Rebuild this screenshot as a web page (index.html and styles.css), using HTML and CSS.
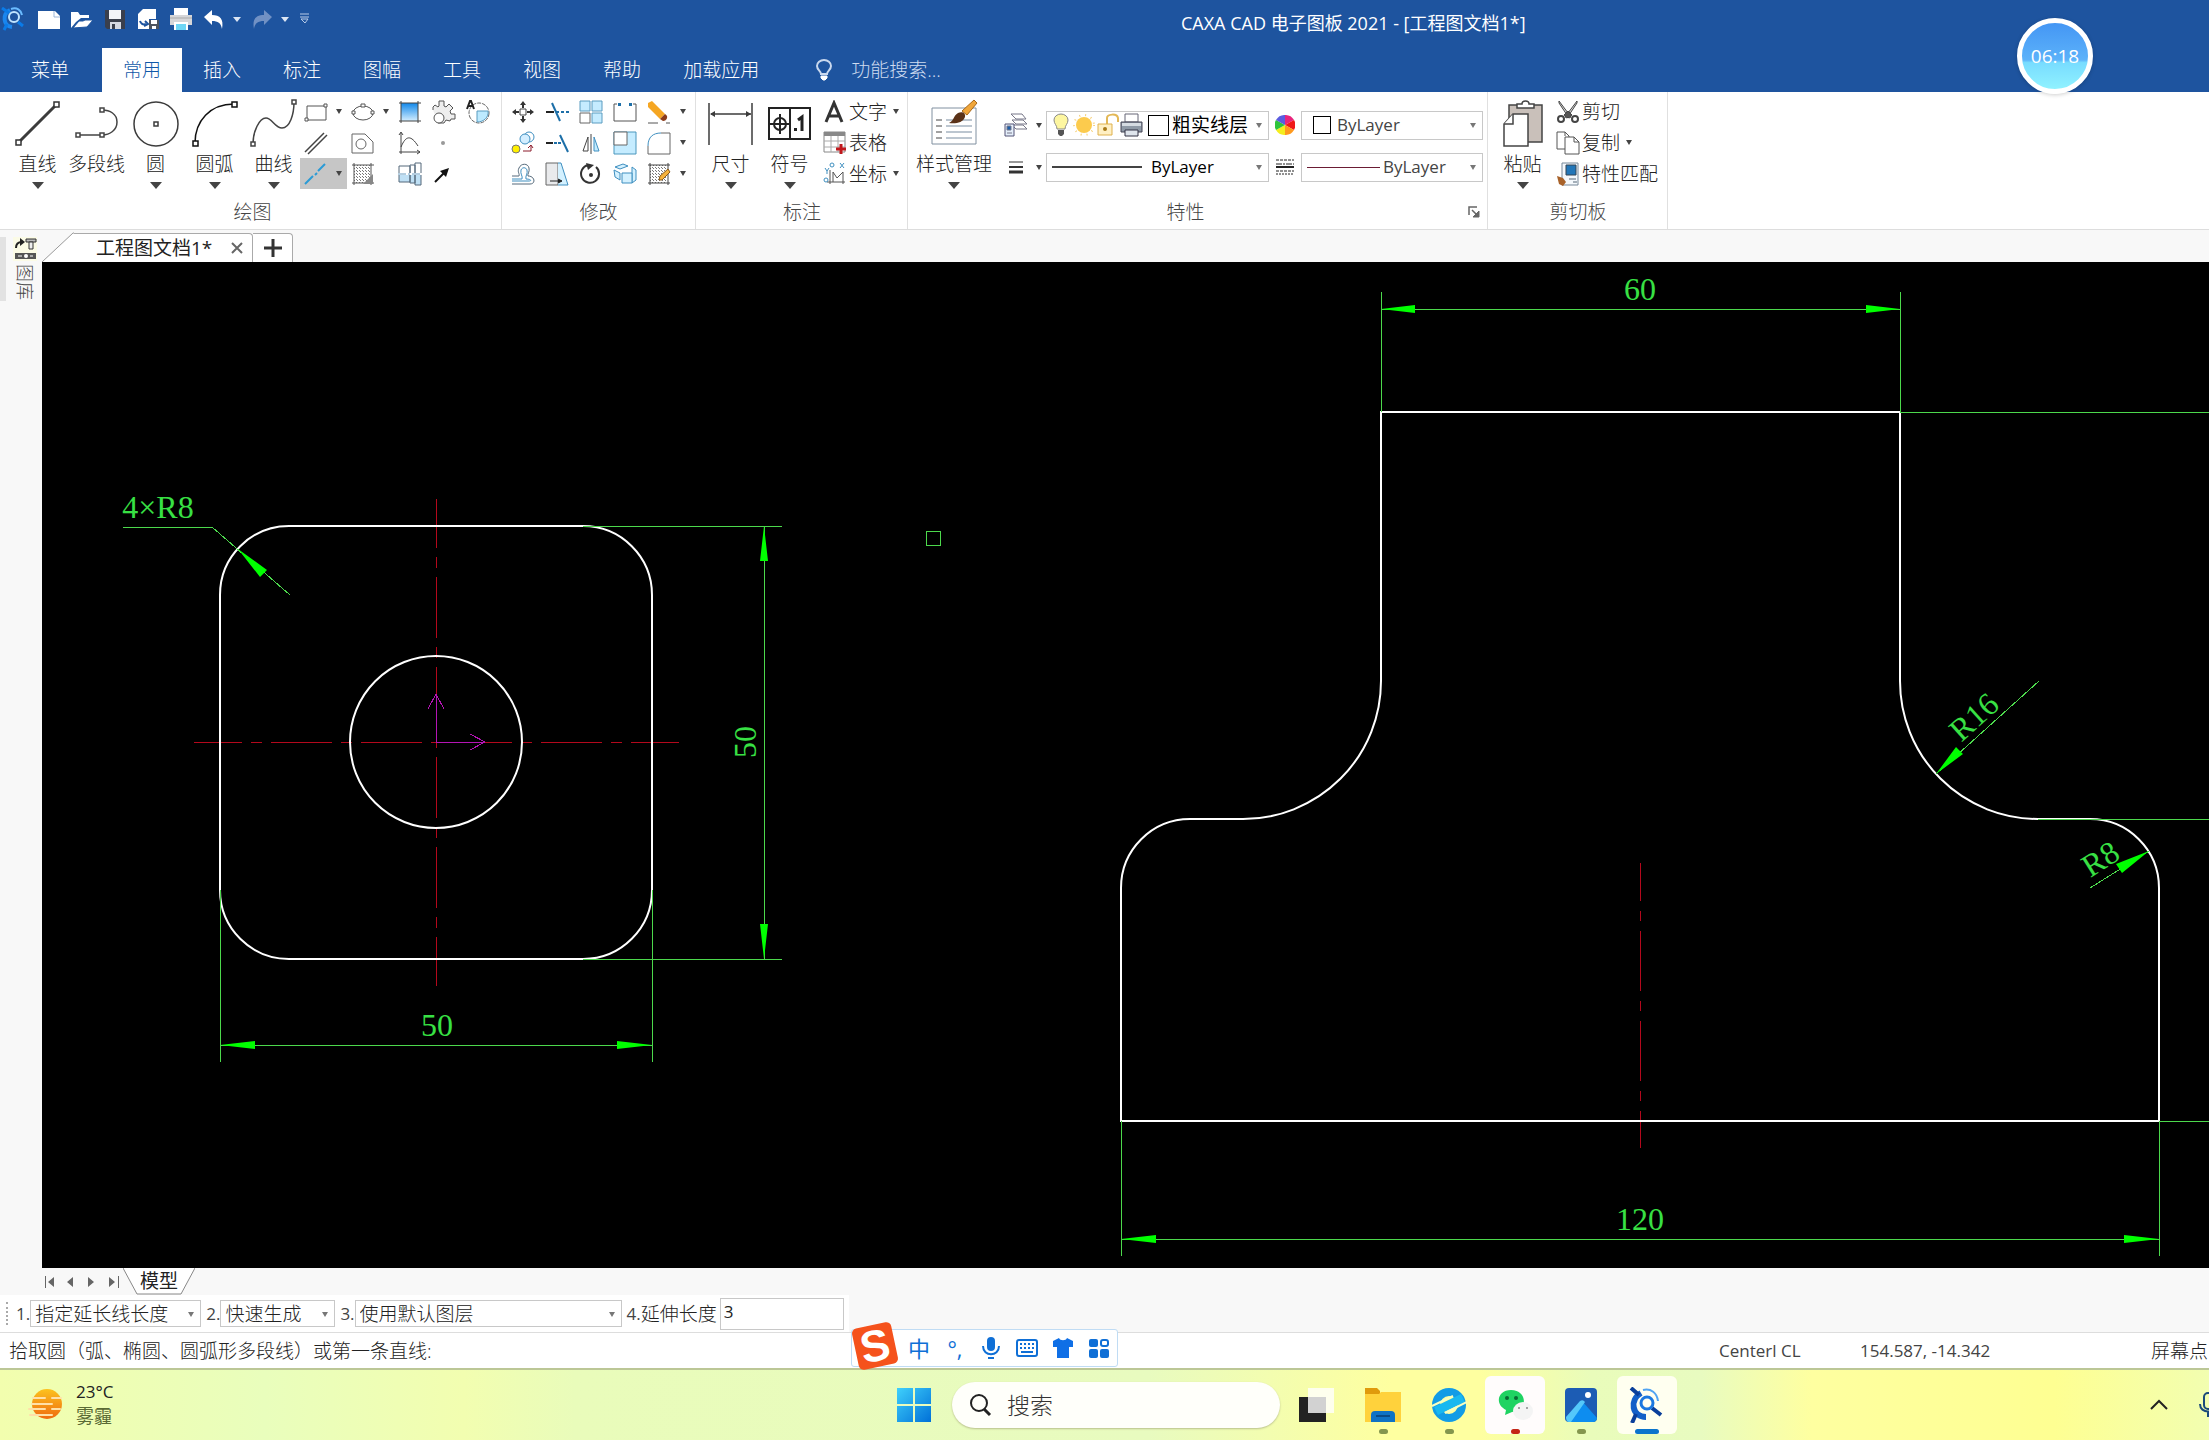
FILE: index.html
```html
<!DOCTYPE html>
<html lang="zh-CN">
<head>
    <meta charset="UTF-8">
    <meta name="viewport" content="width=device-width, initial-scale=1.0">
    <title>CAXA CAD 电子图板 2021</title>
    <link rel="stylesheet" href="styles.css">
</head>
<body>

<!-- title bar and ribbon tabs -->
<header class="header">
    <div class="titlebar">
        <div class="quick">
            <svg class="app" width="24" height="24" viewBox="0 0 24 24" fill="none"><path d="M9 3C1 7 2 19 11 20" stroke="#1a86ee" stroke-width="4"/><circle cx="13" cy="10" r="5" stroke="#bfe4ff" stroke-width="2"/><path d="M1 1l7 5M6 17l-3 6M17 15l5 4" stroke="#0a7be8" stroke-width="3"/><path d="M10 2c6-2 10 1 11 6" stroke="#6bbcff" stroke-width="2"/></svg>
            <svg width="24" height="24" viewBox="0 0 24 24"><path d="M1 4h17l5 5v13H1z" fill="#fff"/><path d="M17 4v6h6" fill="none" stroke="#9db6d8"/></svg>
            <svg width="24" height="24" viewBox="0 0 24 24"><path d="M1 21V5h7l2 3h9v3h-8l-5 4z" fill="#fff"/><path d="M3 21l6-7h4l2-1h8l-6 7z" fill="#fff" stroke="#1e549f"/></svg>
            <svg width="24" height="24" viewBox="0 0 24 24"><path d="M2 3h20v19H4l-2-2z" fill="#3a3f4c"/><path d="M6 3h12v9H6z" fill="#f2f4f8"/><path d="M7 15h11v7H7z" fill="#d5d9e2"/><path d="M9 17h3v5H9z" fill="#3a3f4c"/></svg>
            <svg width="24" height="24" viewBox="0 0 24 24"><path d="M7 2h13v10H2V7z" fill="#fff"/><path d="M2 11h11v11H2z" fill="#fff"/><path d="M4 14c1 3 3 4 6 3M9 14l3 3-4 2" fill="none" stroke="#1e549f" stroke-width="2"/><path d="M13 13h10v9H13z" fill="#4d545f"/><path d="M15 13h6v4h-6zM16 19h4v3h-4z" fill="#fff"/></svg>
            <svg width="24" height="24" viewBox="0 0 24 24"><path d="M5 1h14v7H5z" fill="#fff"/><path d="M1 8h22v10H1z" fill="#d6d6d8"/><path d="M5 15h14v8H5z" fill="#fff"/><path d="M7 17h10v6H7z" fill="#6ed6f5"/><path d="M1 11h22" stroke="#aaa"/></svg>
            <span class="undo"><svg width="24" height="24" viewBox="0 0 24 24"><path d="M2 10l8-7v5c8 0 12 4 10 14-1-6-4-8-10-8v4z" fill="#fff"/></svg><i class="arrow light"></i></span>
            <span class="undo"><svg width="24" height="24" viewBox="0 0 24 24"><path d="M22 10l-8-7v5C6 8 2 12 4 22c1-6 4-8 10-8v4z" fill="#7191c4"/></svg><i class="arrow light"></i></span>
            <svg width="12" height="12" viewBox="0 0 12 12"><path d="M2 1h9M2 4h9" stroke="#b8cbe8"/><path d="M3 6h7l-3 4z" fill="none" stroke="#b8cbe8"/></svg>
        </div>
        <div class="title">CAXA CAD 电子图板 2021 - [工程图文档1*]</div>
    </div>
    <nav class="tabs">
        <a href="#" class="menu">菜单</a>
        <a href="#" class="active">常用</a>
        <a href="#">插入</a>
        <a href="#">标注</a>
        <a href="#">图幅</a>
        <a href="#">工具</a>
        <a href="#">视图</a>
        <a href="#">帮助</a>
        <a href="#">加载应用</a>
        <label class="find">
            <svg width="18" height="22" viewBox="0 0 18 22" fill="none" stroke="#c9d8ee" stroke-width="2"><path d="M6 15c0-3-4-4-4-8a7 6 0 0 1 14 0c0 4-4 5-4 8z"/><path d="M6 17h6v2l-2 2H8l-2-2z" fill="#fff" stroke="#fff" stroke-width="1"/></svg>
            <input type="text" placeholder="功能搜索...">
        </label>
    </nav>
    <div class="timer"><span>06:18</span></div>
</header>

<section class="ribbon">
    <div class="group g-draw">
        <div class="tools">
            <button class="big"><svg width="48" height="48" viewBox="0 0 48 48"><path d="M5 43L42 6" stroke="#3c3c3c" stroke-width="3"/><path d="M2 41h5v5H2zM40 3h5v5h-5z" fill="#fff" stroke="#333" stroke-width="1.5"/></svg>直线<i class="arrow"></i></button>
            <button class="big"><svg width="48" height="48" viewBox="0 0 48 48" fill="none" stroke="#444" stroke-width="1.5"><path d="M5 36h24c8 0 15-5 15-13S37 11 29 11"/><path d="M3 34h4v4H3zM27 34h4v4h-4zM27 9h4v4h-4z" fill="#fff"/></svg>多段线</button>
            <button class="big"><svg width="48" height="48" viewBox="0 0 48 48" fill="none" stroke="#3c3c3c" stroke-width="1.5"><circle cx="24" cy="25" r="22"/><path d="M22 23h4v4h-4z"/></svg>圆<i class="arrow"></i></button>
            <button class="big"><svg width="48" height="48" viewBox="0 0 48 48" fill="none" stroke="#111" stroke-width="1.5"><path d="M4 44C4 22 19 5 43 5"/><path d="M2 42h5v5H2zM41 3h5v5h-5z" fill="#fff"/></svg>圆弧<i class="arrow"></i></button>
            <button class="big"><svg width="48" height="48" viewBox="0 0 48 48" fill="none" stroke="#444" stroke-width="1.5"><path d="M3 45c0-12 6-26 13-26 6 0 9 10 16 10 8 0 12-14 12-26"/><path d="M1 43h4v4H1zM42 1h4v4h-4z" fill="#fff"/></svg>曲线<i class="arrow"></i></button>
            <div class="minis draw-minis">
                <button title="矩形"><svg width="24" height="24" viewBox="0 0 24 24" fill="none" stroke="#555"><path d="M3 6h19v14H3z"/><path d="M1 18h3v3H1zM20 4h3v3h-3z" fill="#fff"/></svg><i class="arrow small"></i></button>
                <button title="椭圆"><svg width="24" height="24" viewBox="0 0 24 24" fill="none" stroke="#555"><ellipse cx="12" cy="13" rx="10" ry="7"/><path d="M1 11h3v3H1zM20 11h3v3h-3zM10 4h4v3h-4z" fill="#fff"/></svg><i class="arrow small"></i></button>
                <button title="渐变"><svg width="24" height="24" viewBox="0 0 24 24"><defs><linearGradient id="blue" x2="0" y2="1"><stop offset="0" stop-color="#1188ea"/><stop offset="1" stop-color="#d4eeff"/></linearGradient></defs><path d="M3 3h17v18H3z" fill="url(#blue)"/><path d="M1 3h22M1 21h22M3 1v22M20 1v22" stroke="#444"/></svg></button>
                <button title="齿轮"><svg width="24" height="24" viewBox="0 0 24 24" fill="#eee" stroke="#555"><path d="M1 10V7l2-2 3 2 1-1V1h5v5l2 1 3-3 4 4-3 3 1 3h4v5h-4l-1 2-4-1-2 3H6"/><circle cx="7" cy="18" r="5" fill="#fff"/></svg></button>
                <button title="局部放大"><svg width="24" height="24" viewBox="0 0 24 24" fill="none"><circle cx="13" cy="13" r="10" stroke="#666" stroke-dasharray="4 1"/><path d="M11 11h11c1 6-4 11-11 11z" fill="#bdeaff" stroke="#5a9cc0"/><path d="M1 9l3-8h1l3 8M2 6h5" stroke="#222" stroke-width="2"/></svg></button>
                <button title="平行线"><svg width="24" height="24" viewBox="0 0 24 24"><path d="M1 21L20 2M4 23L23 4" stroke="#444" stroke-width="1.5"/></svg></button>
                <button title="轮廓"><svg width="24" height="24" viewBox="0 0 24 24" fill="none" stroke="#666"><path d="M1 3h13l8 8v11H1z"/><circle cx="10" cy="13" r="5"/></svg></button>
                <button title="公式曲线"><svg width="24" height="24" viewBox="0 0 24 24" fill="none" stroke="#444"><path d="M3 23V2M1 4l2-3 2 3M1 21h21l-3-2M22 21l-3 2M3 16c5-12 10-12 17-1"/></svg></button>
                <button title="点"><svg width="24" height="24" viewBox="0 0 24 24"><circle cx="11" cy="12" r="2" fill="#999"/></svg></button>
                <span></span>
                <button title="中心线" class="on"><svg width="24" height="24" viewBox="0 0 24 24"><path d="M1 22l8-8M11 13l2-2M14 9l7-7" stroke="#2b9bd6" stroke-width="2"/></svg><i class="arrow small"></i></button>
                <button title="剖面线"><svg width="24" height="24" viewBox="0 0 24 24"><defs><pattern id="hatch" width="3" height="3" patternUnits="userSpaceOnUse"><path d="M0 0h1v1H0zM2 2h1v1H2z" fill="#777"/></pattern></defs><path d="M3 3h17v18H3z" fill="url(#hatch)"/><path d="M1 3h22M1 21h22M3 1v22M20 1v22" stroke="#555"/><path d="M22 12v10H12z" fill="#888"/></svg></button>
                <button title="孔/轴"><svg width="24" height="24" viewBox="0 0 24 24" stroke="#55697a"><path d="M1 4h11v8H1zM12 3h5v9h-5zM17 1h6v11h-6z" fill="#fff"/><path d="M1 12h11v8H1zM12 12h5v9h-5zM17 12h6v11h-6z" fill="#bfe0f5"/><path d="M0 12h24" stroke="#fff" stroke-width="2"/><path d="M0 12h24" stroke="#6a9cc0" stroke-dasharray="8 2 2 2"/></svg></button>
                <button title="箭头"><svg width="24" height="24" viewBox="0 0 24 24"><path d="M3 20l9-9" stroke="#111" stroke-width="2"/><path d="M17 6l-3 9-6-6z" fill="#111"/></svg></button>
            </div>
        </div>
        <div class="caption">绘图</div>
    </div>

    <div class="group g-modify">
        <div class="tools">
            <div class="minis modify-minis">
                <button title="平移"><svg width="24" height="24" viewBox="0 0 24 24"><path d="M9 9h6v6H9z" fill="none" stroke="#444"/><path d="M12 1l3 4h-2v3h-2V5H9zM12 23l3-4h-2v-3h-2v3H9zM1 12l4-3v2h3v2H5v2zM23 12l-4-3v2h-3v2h3v2z" fill="#333"/></svg></button>
                <button title="裁剪"><svg width="24" height="24" viewBox="0 0 24 24"><path d="M1 12h8" stroke="#222" stroke-width="2"/><path d="M11 12h13" stroke="#1d6fa8" stroke-width="2" stroke-dasharray="3 2"/><path d="M7 3l8 18" stroke="#1d6fa8" stroke-width="2"/></svg></button>
                <button title="阵列"><svg width="24" height="24" viewBox="0 0 24 24" fill="#c5ecff" stroke="#5a9cc0"><path d="M1 1h10v10H1zM13 1h10v10H13zM13 13h10v10H13z"/><path d="M1 13h10v10H1z" fill="#fff" stroke="#666"/></svg></button>
                <button title="打断"><svg width="24" height="24" viewBox="0 0 24 24"><path d="M4 4H1v17h22V4h-3" fill="none" stroke="#555"/><path d="M5 3h3v3H5zM16 3h3v3h-3z" fill="#1d6fa8"/></svg></button>
                <button title="删除"><svg width="24" height="24" viewBox="0 0 24 24"><path d="M1 3l4-2 13 13-5 5L1 7z" fill="#f5a623"/><path d="M13 19l5-5c4 2 2 7-2 7z" fill="#8a3a1a"/><path d="M1 23h10M19 23h4" stroke="#555"/></svg><i class="arrow small"></i></button>
                <button title="平移复制"><svg width="24" height="24" viewBox="0 0 24 24"><circle cx="18" cy="6" r="5" fill="#fff" stroke="#3f8fc0"/><circle cx="14" cy="8" r="5" fill="#d4eeff" stroke="#3f8fc0"/><circle cx="5" cy="18" r="4" fill="#ffef00" stroke="#777"/><path d="M12 20h8v-5M17 17l3-3 2 3" fill="none" stroke="#8b1a2a"/></svg></button>
                <button title="延伸"><svg width="24" height="24" viewBox="0 0 24 24"><path d="M1 12h7" stroke="#222" stroke-width="2"/><path d="M9 12h8" stroke="#1d6fa8" stroke-width="2" stroke-dasharray="3 1"/><path d="M15 4l8 17" stroke="#1d6fa8" stroke-width="2"/></svg></button>
                <button title="镜像"><svg width="24" height="24" viewBox="0 0 24 24" fill="none"><path d="M9 6v14H4z" stroke="#444"/><path d="M15 6v14h5z" fill="#c5ecff" stroke="#3f8fc0"/><path d="M12 3v20" stroke="#444"/></svg></button>
                <button title="缩放"><svg width="24" height="24" viewBox="0 0 24 24"><path d="M1 1h22v22H1z" fill="#c5ecff" stroke="#4a97bd"/><path d="M1 1h13v13H1z" fill="#fff" stroke="#666"/></svg></button>
                <button title="过渡"><svg width="24" height="24" viewBox="0 0 24 24" fill="none"><path d="M14 2h9v21H1v-8" stroke="#666"/><path d="M1 15C1 6 6 2 14 2" stroke="#3f8fc0"/></svg><i class="arrow small"></i></button>
                <button title="等距线"><svg width="24" height="24" viewBox="0 0 24 24" fill="none"><path d="M1 14h7c1-2-2-4 0-8 2-5 9-5 10 0 1 4-2 6-1 8 7 0 8 8 2 8H1" stroke="#55697a"/><path d="M1 17h10c1-3-2-5-1-9 1-3 5-3 6 0 1 4-2 6-1 9 5 0 6 2 3 2H1" stroke="#3f8fc0"/></svg></button>
                <button title="拉伸"><svg width="24" height="24" viewBox="0 0 24 24"><path d="M1 1h12v22H1z" fill="#e9eaec" stroke="#666"/><path d="M13 1h3l7 22H13" fill="#d4f1ff" stroke="#3f8fc0"/><path d="M5 19h10M13 17l4 2-4 2" fill="#222" stroke="#222"/></svg></button>
                <button title="旋转"><svg width="24" height="24" viewBox="0 0 24 24"><path d="M17 5a9 9 0 1 1-8-2" fill="none" stroke="#333" stroke-width="2"/><path d="M7 1l8 2-6 5z" fill="#333"/><circle cx="12" cy="13" r="2" fill="#333"/></svg></button>
                <button title="三维"><svg width="24" height="24" viewBox="0 0 24 24" fill="#d4f1ff" stroke="#3f8fc0"><path d="M2 5l8-3 5 2-8 3zM1 8l6 3v7l-5-3zM19 5l4 3v10l-4 3z"/><path d="M9 11h10v10H9z"/></svg></button>
                <button title="编辑填充"><svg width="24" height="24" viewBox="0 0 24 24"><path d="M3 3h17v18H3z" fill="url(#hatch)"/><path d="M1 3h22M1 21h22M3 1v22M21 1v22" stroke="#444"/><path d="M12 18l1-4 8-7 2 3-8 8z" fill="#f5b23c" stroke="#8a5a1a"/></svg><i class="arrow small"></i></button>
            </div>
        </div>
        <div class="caption">修改</div>
    </div>

    <div class="group g-note">
        <div class="tools">
            <button class="big"><svg width="48" height="48" viewBox="0 0 48 48" stroke="#3c3c3c" stroke-width="1.5"><path d="M2 4v42M45 4v42M4 15h40"/><path d="M3 15l5-3v6zM44 15l-5-3v6z" fill="#3c3c3c" stroke="none"/></svg>尺寸<i class="arrow"></i></button>
            <button class="big"><svg width="48" height="48" viewBox="0 0 48 48" fill="none" stroke="#222" stroke-width="2"><path d="M3 9h41v31H3zM24 9v31M4 25h19M14 15v20"/><circle cx="14" cy="25" r="6"/><path d="M28 29h3v3h-3z" fill="#222" stroke="none"/><path d="M32 21l4-3v14" stroke-width="3"/></svg>符号<i class="arrow"></i></button>
            <div class="rows">
                <button><svg width="24" height="24" viewBox="0 0 24 24" fill="none" stroke="#333" stroke-width="3"><path d="M3 22L11 3l8 19M6 16h10"/></svg>文字<i class="arrow small"></i></button>
                <button><svg width="24" height="24" viewBox="0 0 24 24"><path d="M1 1h21v20H1z" fill="#fff" stroke="#888"/><path d="M1 1h21v4H1z" fill="#888"/><path d="M1 10h21M1 16h21M8 5v16M15 5v16" stroke="#aaa"/><path d="M18 13v10M13 18h10" stroke="#c0181c" stroke-width="3"/></svg>表格</button>
                <button><svg width="24" height="24" viewBox="0 0 24 24" fill="none"><path d="M7 8v14M4 20h18M10 20V10l4 6 6-6v12" stroke="#555"/><path d="M2 6l2 3 2-3M4 9v3M17 1l4 5M21 1l-4 5" stroke="#3f8fc0"/><circle cx="9" cy="3" r="2" stroke="#3f8fc0"/><circle cx="3" cy="18" r="2" stroke="#3f8fc0"/></svg>坐标<i class="arrow small"></i></button>
            </div>
        </div>
        <div class="caption">标注</div>
    </div>

    <div class="group g-prop">
        <div class="tools">
            <button class="big"><svg width="48" height="48" viewBox="0 0 48 48"><path d="M2 9h44v36H2z" fill="#fff" stroke="#8090a0"/><path d="M6 21h6M6 27h6M6 33h6M6 39h6" stroke="#444"/><path d="M16 21h26M16 27h26M16 33h26M16 39h26" stroke="#bcc6d0" stroke-width="2"/><path d="M32 12L44 1l3 3-10 12z" fill="#f0a63a" stroke="#a86818"/><path d="M19 24c5-2 4-7 9-10 4-2 8 0 7 4-2 6-10 7-16 6z" fill="#5a3218"/></svg>样式管理<i class="arrow"></i></button>
            <div class="props">
                <button class="tiny"><svg width="24" height="24" viewBox="0 0 24 24" fill="#fff" stroke="#778"><path d="M8 12h11l4 4H12zM8 7h11l4 4H12zM7 1h11l4 5H12z"/><path d="M1 11h9v12H1z" fill="#e4eefa" stroke="#557"/><path d="M3 13h4v4H3z" fill="#1d5fa8"/><path d="M3 20h5"/></svg><i class="arrow small"></i></button>
                <div class="combo layer">
                    <svg width="20" height="24" viewBox="0 0 20 24"><path d="M6 16C6 12 3 11 3 7a7 6 0 0 1 14 0c0 4-3 5-3 9z" fill="#fdf6a0" stroke="#888"/><path d="M7 17h6v4l-2 2H9l-2-2z" fill="#555"/></svg>
                    <svg width="24" height="24" viewBox="0 0 24 24"><circle cx="13" cy="12" r="10" fill="none" stroke="#f6cf75" stroke-width="2" stroke-dasharray="1 5"/><circle cx="13" cy="12" r="8" fill="#fccb4d"/></svg>
                    <svg width="24" height="24" viewBox="0 0 24 24"><path d="M12 11V5c0-4 10-5 11 0v4" fill="none" stroke="#e3b856" stroke-width="2"/><path d="M3 11h14v11H3z" fill="#fff0c4" stroke="#dfb14d"/><circle cx="10" cy="16" r="2" fill="#a87a18"/></svg>
                    <svg width="24" height="24" viewBox="0 0 24 24"><path d="M6 1h13v8H6z" fill="#fff" stroke="#667"/><path d="M2 9h21v10H2z" fill="#8e99a6" stroke="#445"/><path d="M3 10h19v3H3z" fill="#d5dbe2"/><path d="M6 17h13v6H6z" fill="#dfe5ec" stroke="#334"/></svg>
                    <i class="swatch big-swatch"></i>
                    <select aria-label="图层"><option>粗实线层</option></select>
                </div>
                <svg width="20" height="20" viewBox="0 0 20 20"><path d="M10 10V0a10 10 0 0 1 9 5z" fill="#e8247c"/><path d="M10 10l9-5a10 10 0 0 1 0 10z" fill="#f01818"/><path d="M10 10l9 5a10 10 0 0 1-9 5z" fill="#ff9a1e"/><path d="M10 10v10a10 10 0 0 1-9-5z" fill="#f4ee1e"/><path d="M10 10l-9 5a10 10 0 0 1 0-10z" fill="#2ec43c"/><path d="M10 10L1 5a10 10 0 0 1 9-5z" fill="#5a5ce0"/></svg>
                <div class="combo color"><i class="swatch"></i><select aria-label="颜色"><option>ByLayer</option></select></div>
                <button class="tiny"><svg width="24" height="24" viewBox="0 0 24 24" stroke="#333"><path d="M5 7h14"/><path d="M5 12h14" stroke-width="2"/><path d="M5 17h14" stroke-width="3"/></svg><i class="arrow small"></i></button>
                <div class="combo width"><i class="thick"></i><select aria-label="线宽"><option>ByLayer</option></select></div>
                <svg width="20" height="20" viewBox="0 0 20 20" stroke="#222"><path d="M1 3h18M1 14h18" stroke-dasharray="3 1"/><path d="M1 7h18" stroke-dasharray="6 1 2 1"/><path d="M1 10h18" stroke-width="2"/><path d="M1 17h18" stroke-dasharray="2 1"/></svg>
                <div class="combo type"><i class="thin"></i><select aria-label="线型"><option>ByLayer</option></select></div>
            </div>
        </div>
        <div class="caption">特性<svg class="launch" width="14" height="14" viewBox="0 0 14 14" fill="none" stroke="#666"><path d="M2 10V2h8M5 5l6 6" stroke-width="1.5"/><path d="M12 6v6H6z" fill="#666"/></svg></div>
    </div>

    <div class="group g-clip">
        <div class="tools">
            <button class="big"><svg width="48" height="48" viewBox="0 0 48 48" stroke="#444" stroke-width="1.5"><path d="M10 6h33v37H10z" fill="#c9c0ba"/><path d="M18 9V5h5c0-4 7-4 7 0h5v4z" fill="#fff"/><path d="M5 25l9-10h15v32H5z" fill="#fff"/><path d="M5 25h9V15" fill="#fff"/></svg>粘贴<i class="arrow"></i></button>
            <div class="rows">
                <button><svg width="24" height="24" viewBox="0 0 24 24" fill="none" stroke="#444"><path d="M3 1l12 16-2 1L3 3zM21 1L9 17l2 1L21 3z" fill="#ddd"/><path d="M8 15l4-4 4 4-4 3z" fill="#555"/><circle cx="5" cy="19" r="3" stroke-width="2"/><circle cx="19" cy="19" r="3" stroke-width="2"/></svg>剪切</button>
                <button><svg width="24" height="24" viewBox="0 0 24 24" fill="#fff" stroke="#555"><path d="M1 1h8l4 4v13H1z"/><path d="M9 6h9l5 5v12H9z"/><path d="M18 6v5h5M9 1v4" fill="none"/></svg>复制<i class="arrow small"></i></button>
                <button><svg width="24" height="24" viewBox="0 0 24 24"><path d="M6 1h16v22H6z" fill="#f4f8fc" stroke="#789"/><path d="M10 3h10v10H10z" fill="#2276b8" stroke="#345"/><path d="M13 17h7M17 20h4" stroke="#567"/><path d="M1 14l6 2 3 4-3 4-4-2z" fill="#a8622a"/></svg>特性匹配</button>
            </div>
        </div>
        <div class="caption">剪切板</div>
    </div>
</section>

<!-- library strip and drawing area -->
<main class="work">
    <aside class="side">
        <svg width="24" height="24" viewBox="0 0 24 24"><path d="M0 0h24v24H0z" fill="#fbfbe6"/><path d="M3 11c0-4 2-6 6-6" fill="none" stroke="#222" stroke-width="2"/><path d="M7 1l5 4-5 4z" fill="#222"/><path d="M13 2h10v3H13z" fill="#bbb" stroke="#333"/><path d="M16 5h4v7h-4z" fill="#eee" stroke="#333"/><path d="M2 16h21v6H2z" fill="#555"/><path d="M5 19h4M17 19h3" stroke="#fff"/><circle cx="13" cy="19" r="2" fill="#fff"/></svg>
        <span>图库</span>
    </aside>
    <div class="docs">
        <div class="doctabs">
            <svg class="slope" width="32" height="32" viewBox="0 0 32 32"><path d="M0 32L31 3h1v29z" fill="#fff"/><path d="M0 32L31 3h1" fill="none" stroke="#999"/></svg>
            <div class="doctab">工程图文档1*<button title="关闭"><svg width="12" height="12" viewBox="0 0 12 12" stroke="#666" stroke-width="2"><path d="M1 1l10 10M11 1L1 11"/></svg></button></div>
            <button class="newtab" title="新建"><svg width="18" height="18" viewBox="0 0 18 18" stroke="#333" stroke-width="3"><path d="M9 0v18M0 9h18"/></svg></button>
        </div>
        <div class="canvas">
            <svg class="drawing" width="100%" height="100%">
                <g transform="translate(-42 -262)">
                    <g class="center">
                        <path d="M436 499V986" stroke-dasharray="61 9 11 9" stroke-dashoffset="12"/>
                        <path d="M194 742H679" stroke-dasharray="61 9 11 9" stroke-dashoffset="13"/>
                        <path d="M1640 863V1148" stroke-dasharray="60 10 10 10" stroke-dashoffset="22"/>
                    </g>
                    <g class="outline">
                        <rect x="220" y="526" width="432" height="433" rx="69"/>
                        <circle cx="436" cy="742" r="86"/>
                        <path d="M1381 412H1900V681A138 138 0 0 0 2038 819H2090A69 69 0 0 1 2159 888V1121H1121V888A69 69 0 0 1 1190 819H1243A138 138 0 0 0 1381 681Z"/>
                    </g>
                    <path class="ucs" d="M436 742V694M428 709L436 694L444 709M436 742H485M470 734L485 742L470 750"/>
                    <g class="dim">
                        <path d="M583 526H782M583 959H782M764 526V959"/>
                        <path d="M220 890V1062M652 890V1062M220 1045H652"/>
                        <path d="M123 527H212L290 595"/>
                        <path d="M1381 292V412M1900 292V412M1381 309H1900"/>
                        <path d="M1900 412H4000M2038 819H4000M2159 1121H4000"/>
                        <path d="M1121 1121V1256M2159 1121V1256M1121 1239H2159"/>
                        <path d="M2039 681L1936 774M2090 888L2149 851"/>
                        <rect x="926" y="531" width="14" height="14"/>
                    </g>
                    <g class="tips">
                        <path d="M764 526l4 35h-8zM764 959l4-35h-8z"/>
                        <path d="M220 1045l35-4v8zM652 1045l-35-4v8z"/>
                        <path d="M1381 309l34-4v8zM1900 309l-34-4v8z"/>
                        <path d="M1121 1239l35-4v8zM2159 1239l-35-4v8z"/>
                        <path d="M238 549l29 21-7 7zM1936 774l20-27 7 7zM2149 851l-27 22-6-9z"/>
                    </g>
                    <g class="values">
                        <text x="158" y="518">4×R8</text>
                        <text x="437" y="1036">50</text>
                        <text x="1640" y="300">60</text>
                        <text x="1640" y="1230">120</text>
                        <text transform="translate(756 742) rotate(-90)">50</text>
                        <text transform="translate(1981 725) rotate(-42)">R16</text>
                        <text transform="translate(2106 868) rotate(-32)">R8</text>
                    </g>
                </g>
            </svg>
        </div>
    </div>
</main>

<div class="sheets">
    <div class="nav">
        <svg width="64" height="12" viewBox="0 0 64 12" fill="#666"><path d="M0 0h1v12H0zM9 1v10L3 6zM28 1v10l-6-5zM43 1v10l6-5z"/></svg>
        <svg width="12" height="12" viewBox="0 0 12 12" fill="#666"><path d="M-3 1v10l6-5z"/><path d="M0 1v10l6-5zM9 0h1v12H9z"/></svg>
    </div>
    <div class="sheet"><svg width="72" height="27" viewBox="0 0 72 27"><path d="M0 0l14 26h44L72 0" fill="#fff" stroke="#888"/></svg><span>模型</span></div>
</div>

<form class="options">
    <div class="optbox">
        <i class="grip"></i>
        <label><span class="num">1.</span><span class="combo o1"><select><option>指定延长线长度</option></select></span></label>
        <label><span class="num">2.</span><span class="combo o2"><select><option>快速生成</option></select></span></label>
        <label><span class="num">3.</span><span class="combo o3"><select><option>使用默认图层</option></select></span></label>
        <label><span class="num">4.</span>延伸长度<input type="text" value="3"></label>
    </div>
</form>

<div class="status">
    <span class="prompt">拾取圆（弧、椭圆、圆弧形多段线）或第一条直线:</span>
    <span class="layer-name">Centerl CL</span>
    <span class="coords">154.587, -14.342</span>
    <span class="snap">屏幕点</span>
    <div class="ime">
        <div class="sogou"><span>S</span></div>
        <b>中</b>
        <b>°,</b>
        <svg width="24" height="24" viewBox="0 0 24 24" fill="#0f6fd6"><rect x="8" y="1" width="8" height="14" rx="4"/><path d="M4 10c0 11 16 11 16 0" fill="none" stroke="#0f6fd6" stroke-width="2"/><path d="M9 21h6v2H9z"/></svg>
        <svg width="24" height="24" viewBox="0 0 24 24" fill="none" stroke="#0f6fd6" stroke-width="2"><rect x="2" y="4" width="20" height="16" rx="2"/><path d="M5 8h14M5 12h14" stroke-dasharray="2 2"/><path d="M6 16h12"/></svg>
        <svg width="24" height="24" viewBox="0 0 24 24" fill="#0f6fe6"><path d="M8 2c1 3 7 3 8 0l6 3v6h-4v11H6V11H2V5z"/></svg>
        <svg width="24" height="24" viewBox="0 0 24 24" fill="#0f6fd6"><rect x="2" y="3" width="9" height="8" rx="2"/><rect x="2" y="13" width="9" height="9" rx="2"/><rect x="13" y="13" width="9" height="9" rx="2"/><rect x="14" y="4" width="7" height="6" rx="2" fill="none" stroke="#0f6fd6" stroke-width="2"/></svg>
    </div>
</div>

<footer class="taskbar">
    <div class="weather">
        <svg width="36" height="36" viewBox="0 0 36 36"><defs><linearGradient id="sun" x2="0" y2="1"><stop offset="0" stop-color="#fcc21e"/><stop offset="1" stop-color="#ef6a10"/></linearGradient></defs><circle cx="19" cy="18" r="15" fill="url(#sun)"/><path d="M5 12h12M24 12h9M4 18h20M1 23h16M24 23h8M2 29h22" stroke="#ffe0a8" stroke-width="2" stroke-linecap="round"/></svg>
        <div><p>23°C</p><p class="sky">雾霾</p></div>
    </div>
    <button class="win" title="开始"><svg width="36" height="36" viewBox="0 0 36 36"><defs><linearGradient id="win" x2="1" y2="1"><stop offset="0" stop-color="#3fd0fb"/><stop offset="1" stop-color="#0070d8"/></linearGradient></defs><path d="M1 1h16v16H1zM19 1h16v16H19zM1 19h16v16H1zM19 19h16v16H19z" fill="url(#win)"/></svg></button>
    <label class="search">
        <svg width="24" height="24" viewBox="0 0 24 24" fill="none" stroke="#222" stroke-width="2"><circle cx="11" cy="10" r="8"/><path d="M16 16l6 6" stroke-width="3"/></svg>
        <input type="text" placeholder="搜索">
    </label>
    <div class="apps">
        <button title="任务视图"><svg width="36" height="36" viewBox="0 0 36 36"><path d="M0 10h27v25H0z" fill="#222"/><path d="M9 1h26v25H9z" fill="#fff" opacity=".8"/></svg></button>
        <button title="文件" class="run"><svg width="36" height="36" viewBox="0 0 36 36"><path d="M0 1h12l3 3v5H0z" fill="#e09a0c"/><path d="M0 7h14l2-2h20v30H0z" fill="#ffd23c"/><path d="M6 35V28q0-4 4-4h16q4 0 4 4v7z" fill="#0f72c4"/><path d="M11 29h14" stroke="#0a4a86" stroke-width="2"/></svg></button>
        <button title="浏览器" class="run"><svg width="36" height="36" viewBox="0 0 36 36"><circle cx="18" cy="18" r="13" fill="none" stroke="#129ce6" stroke-width="8"/><path d="M5 24L32 11" stroke="#19b8f0" stroke-width="9"/><path d="M36 15L14 26M1 19L22 9" stroke="#f8ffc0" stroke-width="2"/></svg></button>
        <button title="微信" class="run alert"><svg width="36" height="36" viewBox="0 0 36 36"><path d="M14 3c16 0 18 20 1 22l-7 3 1-5C-3 17 1 3 14 3z" fill="#1fd362"/><circle cx="10" cy="11" r="2" fill="#0a6a34"/><circle cx="19" cy="11" r="2" fill="#0a6a34"/><ellipse cx="26" cy="24" rx="10" ry="9" fill="#f4f4f4"/><circle cx="22" cy="21" r="1" fill="#888"/><circle cx="30" cy="21" r="1" fill="#888"/></svg></button>
        <button title="照片" class="run"><svg width="36" height="36" viewBox="0 0 36 36"><rect x="2" y="1" width="32" height="34" rx="4" fill="#1c5cb4"/><path d="M4 33L19 14l15 17q-1 4-4 4H6z" fill="#0d8df0"/><path d="M3 30L17 14q3-2 5 1L8 35H6q-3 0-3-5z" fill="#54c8fa"/><circle cx="25" cy="8" r="3" fill="#fff"/></svg></button>
        <button title="CAXA" class="run current"><svg width="36" height="36" viewBox="0 0 36 36" fill="none"><path d="M12 6C0 13 3 30 17 30" stroke="#1360c8" stroke-width="6"/><path d="M2 1l8 7M7 27L3 36M23 21l9 7" stroke="#0a3f9a" stroke-width="4"/><circle cx="18" cy="16" r="6" stroke="#1b78e0" stroke-width="3"/><path d="M14 3c8-2 14 3 15 11" stroke="#52a4f2" stroke-width="2"/></svg></button>
    </div>
    <div class="tray">
        <svg width="18" height="12" viewBox="0 0 18 12" fill="none" stroke="#222" stroke-width="2"><path d="M1 10l8-8 8 8"/></svg>
        <svg width="20" height="26" viewBox="0 0 20 26" fill="none" stroke="#1a4a7a" stroke-width="2"><rect x="6" y="1" width="8" height="16" rx="4"/><path d="M2 12c0 10 16 10 16 0M10 20v5"/></svg>
    </div>
</footer>

</body>
</html>
```

FILE: styles.css
```css
* {
    margin: 0;
    padding: 0;
    box-sizing: border-box;
}
body {
    display: flex;
    flex-direction: column;
    min-height: 100vh;
    overflow-x: hidden;
    background: #f8f8f8;
    color: #222;
    font-family: "Open Sans", "Noto Sans CJK SC", sans-serif;
    font-size: 19px;
    font-weight: 300;
    line-height: 24px;
}
button, input, select {
    border: none;
    background: none;
    color: inherit;
    font: inherit;
}
select { appearance: none; outline: none; cursor: pointer; }
svg { flex: none; display: block; }
a { color: inherit; text-decoration: none; }

.arrow {
    border: 6px solid transparent;
    border-top: 7px solid #444;
    border-bottom: 0;
}
.arrow.small { border-width: 5px 3px 0; }
.arrow.light { border-width: 5px 4px 0; border-top-color: #dce6f4; }

/* header */
.header {
    position: relative;
    height: 92px;
    background: #1e549f;
    color: #fff;
}
.titlebar {
    display: flex;
    align-items: center;
    height: 48px;
    padding-bottom: 10px;
}
.quick {
    display: flex;
    align-items: center;
    gap: 9px;
    width: 1181px;
    padding-left: 1px;
}
.app { margin-right: 3px; }
.undo { display: flex; align-items: center; gap: 7px; }
.title { font-size: 18px; font-weight: 400; padding-top: 8px; }
.tabs {
    display: flex;
    height: 44px;
}
.tabs a {
    padding: 0 21px;
    line-height: 44px;
}
.tabs .menu { padding: 0 33px 0 31px; }
.tabs .active { background: #fff; color: #1058a8; }
.find {
    display: flex;
    align-items: center;
    gap: 18px;
    margin-left: 35px;
}
.find input { width: 140px; }
.find input::placeholder { color: #cfdcf0; opacity: 1; }
.timer {
    position: absolute;
    top: 18px;
    right: 116px;
    z-index: 2;
    width: 76px;
    height: 76px;
    border: 5px solid #fff;
    border-radius: 50%;
    background: linear-gradient(#4496f4, #5cb2fa 56%, #78dcff 60%, #90f2ff);
    box-shadow: 0 1px 4px rgba(0,0,0,0.2);
    font-weight: 400;
    line-height: 66px;
    text-align: center;
}

/* ribbon */
.ribbon {
    display: flex;
    height: 138px;
    background: #fff;
    border-bottom: 1px solid #ddd;
}
.group {
    display: flex;
    flex-direction: column;
    padding: 4px 0 0 8px;
    border-right: 1px solid #e0e0e0;
}
.g-draw { width: 502px; }
.g-modify { width: 194px; padding-left: 4px; }
.g-note { width: 212px; padding-left: 5px; }
.g-prop { width: 580px; }
.g-clip { width: 180px; padding-left: 5px; }
.tools { display: flex; height: 98px; }
.big {
    display: flex;
    flex-direction: column;
    align-items: center;
    width: 59px;
    padding-top: 3px;
    white-space: nowrap;
}
.big svg { margin-bottom: 5px; }
.big .arrow { margin-top: 6px; }
.minis { display: grid; grid-auto-rows: 31px; }
.draw-minis { grid-template-columns: 47px 47px 34px 34px 34px; margin-left: -3px; }
.modify-minis { grid-template-columns: 34px 34px 34px 34px 52px; }
.minis button {
    display: flex;
    align-items: center;
    gap: 8px;
    padding-left: 4px;
}
.modify-minis button { gap: 9px; padding-left: 5px; }
.minis .on { background: #c6c6c6; }
.rows { display: flex; flex-direction: column; padding-left: 4px; }
.rows button {
    display: flex;
    align-items: center;
    gap: 2px;
    height: 31px;
    white-space: nowrap;
}
.rows .arrow { margin-left: 4px; }
.caption {
    position: relative;
    height: 35px;
    padding-right: 4px;
    line-height: 37px;
    text-align: center;
    color: #444;
}
.g-prop .big { width: 76px; }
.g-prop .caption { padding-right: 32px; }
.launch { position: absolute; right: 6px; top: 11px; }

.props {
    display: grid;
    grid-template-columns: 46px 223px 32px 182px;
    grid-auto-rows: 42px;
    align-items: center;
    justify-items: center;
    padding: 8px 0 0 8px;
}
.tiny { display: flex; align-items: center; gap: 8px; }
.combo {
    position: relative;
    display: flex;
    align-items: center;
    width: 100%;
    height: 29px;
    border: 1px solid #c8c8c8;
    background: #fff;
}
.combo::after {
    content: "";
    position: absolute;
    right: 6px;
    top: 11px;
    border: 3px solid transparent;
    border-top: 5px solid #777;
    border-bottom: 0;
    pointer-events: none;
}
.combo select { flex: 1; height: 27px; min-width: 0; }
.props select { color: #444; font-size: 17px; font-weight: 400; }
.props .layer { padding-left: 4px; }
.props .layer select { padding-left: 3px; color: #000; font-size: 19px; }
.props .width select { color: #000; }
.swatch {
    width: 18px;
    height: 18px;
    margin: 0 6px 0 11px;
    border: 1px solid #000;
}
.big-swatch { width: 21px; height: 21px; margin: 0 0 0 5px; }
.thick { width: 90px; margin: 0 9px 0 5px; border-top: 2px solid #444; }
.thin { width: 73px; margin: 0 3px 0 5px; border-top: 1px solid #6b1c34; }

/* work area */
.work { display: flex; flex: 1; }
.side {
    display: flex;
    flex-direction: column;
    align-items: center;
    width: 42px;
    padding: 7px 0 0 7px;
    background: linear-gradient(#e2e2e2, #e2e2e2) 0 7px / 6px 64px no-repeat;
    color: #444;
}
.side span {
    margin-top: 3px;
    font-size: 18px;
    writing-mode: vertical-rl;
    text-orientation: sideways;
}
.docs { display: flex; flex: 1; flex-direction: column; min-width: 0; }
.doctabs { display: flex; height: 32px; }
.doctab, .newtab {
    display: flex;
    align-items: center;
    margin-top: 3px;
    background: #fff;
    border: 1px solid #aaa;
    border-bottom: 0;
    border-radius: 0 4px 0 0;
}
.doctab {
    gap: 19px;
    padding: 0 9px 0 22px;
    border-left: 0;
    font-weight: 400;
}
.newtab { width: 40px; justify-content: center; border-left: 0; }
.canvas { position: relative; flex: 1; background: #000; overflow: hidden; }
.drawing { position: absolute; inset: 0; }
.outline { fill: none; stroke: #fff; stroke-width: 2; }
.center, .ucs, .dim { fill: none; stroke-width: 1; shape-rendering: crispEdges; }
.center { stroke: #b4081c; }
.ucs { stroke: #b414b4; }
.dim { stroke: #4cd84c; }
.tips { fill: #00ff00; }
.values {
    fill: #38e044;
    font-family: "Liberation Serif", serif;
    font-size: 32px;
    text-anchor: middle;
}

/* sheet tabs, option bar, status */
.sheets { display: flex; height: 27px; padding-left: 45px; }
.nav { display: flex; align-items: center; width: 78px; }
.sheet { position: relative; width: 72px; text-align: center; }
.sheet span {
    position: absolute;
    inset: 0;
    font-weight: 400;
    line-height: 26px;
}
.options { display: flex; height: 38px; border-bottom: 1px solid #ddd; }
.optbox {
    display: flex;
    align-items: center;
    gap: 5px;
    padding: 0 5px 0 6px;
    background: #fff;
}
.optbox label { display: flex; align-items: center; white-space: nowrap; }
.optbox .combo { height: 27px; }
.optbox select { height: 25px; padding-left: 4px; }
.optbox input {
    width: 124px;
    height: 32px;
    margin-left: 3px;
    padding: 0 3px 4px;
    border: 1px solid #c8c8c8;
    font-size: 17px;
    font-weight: 400;
}
.num { color: #444; font-size: 17px; font-weight: 400; }
.optbox .o1 { width: 171px; }
.optbox .o2 { width: 115px; }
.optbox .o3 { width: 267px; }
.grip { width: 2px; height: 23px; margin-right: 3px; border-left: 2px dotted #aaa; }
.status {
    position: relative;
    display: flex;
    align-items: center;
    height: 35px;
    padding-left: 9px;
    background: #fff;
    white-space: nowrap;
}
.prompt { flex: 1; }
.layer-name, .coords { color: #444; font-size: 17px; font-weight: 400; }
.layer-name { width: 141px; }
.coords { width: 291px; }
.snap { width: 58px; }
.ime {
    position: absolute;
    left: 851px;
    top: -4px;
    display: flex;
    align-items: center;
    gap: 12px;
    height: 38px;
    padding-right: 6px;
    border: 1px solid #c0dcf4;
    border-radius: 3px;
    background: #fff;
}
.ime b { width: 24px; color: #0f6fd6; font-size: 22px; text-align: center; }
.sogou {
    width: 40px;
    height: 42px;
    margin-left: 3px;
    margin-bottom: 4px;
    border-radius: 5px;
    background: #f5521c;
    color: #fff;
    font-family: "Liberation Sans", sans-serif;
    font-size: 44px;
    font-weight: 700;
    line-height: 42px;
    text-align: center;
    transform: rotate(-12deg);
}

/* taskbar */
.taskbar {
    display: flex;
    align-items: center;
    height: 72px;
    border-top: 2px solid #bcc796;
    background: linear-gradient(90deg, #f2feae, #e9febc 12%, #f2feb0 21%, #e9fcba 26%, #e8fbbf 52%, #feffa0 63%, #feffa0 67%, #e9fcba 72%, #e8fbc0 77%, #feffa0 82%, #feff92 93%, #f2feb0);
}
.weather {
    display: flex;
    align-items: center;
    gap: 12px;
    width: 896px;
    padding: 0 0 2px 28px;
    font-size: 17px;
    font-weight: 400;
}
.sky { color: #5a6a35; font-size: 18px; }
.search {
    display: flex;
    align-items: center;
    gap: 15px;
    width: 328px;
    height: 46px;
    margin-left: 20px;
    padding-left: 16px;
    border-radius: 23px;
    background: #fffffa;
    box-shadow: 0 1px 2px #b9c08c;
}
.search input { width: 240px; font-size: 23px; }
.search input::placeholder { color: #333; opacity: 1; }
.apps { display: flex; align-items: center; margin-left: 4px; }
.apps button {
    position: relative;
    display: flex;
    align-items: center;
    justify-content: center;
    width: 60px;
    height: 58px;
    margin: 0 3px;
    border-radius: 6px;
}
.run::after {
    content: "";
    position: absolute;
    left: 50%;
    bottom: 0;
    width: 9px;
    height: 5px;
    margin-left: -4px;
    border-radius: 3px;
    background: #84964e;
}
.apps .alert { background: #fffcfc; }
.apps .alert::after { background: #c42415; }
.apps .current { background: #fffff0; }
.apps .current::after { width: 24px; margin-left: -12px; background: #0a74cc; }
.tray {
    display: flex;
    align-items: center;
    gap: 30px;
    margin-left: auto;
    margin-right: -9px;
}
```
